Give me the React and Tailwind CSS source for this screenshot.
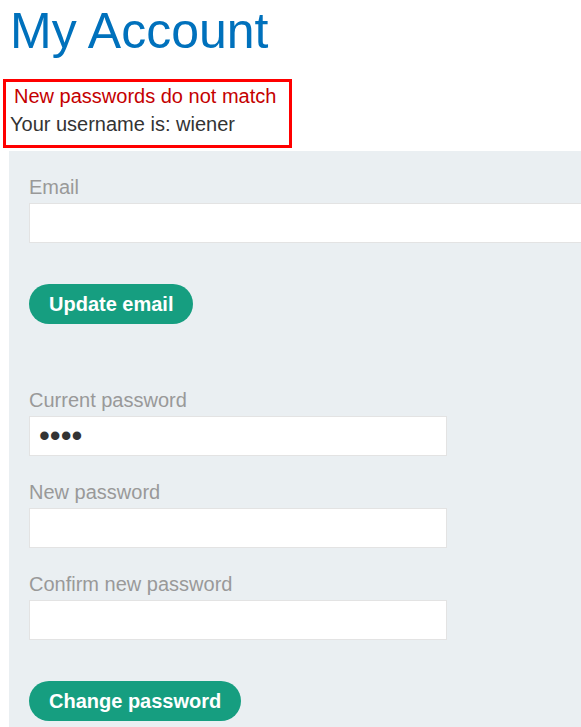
import React from 'react';

// Account page: heading, status notice, and the email / password forms
const Field = ({ label, type = 'text', value, wide = false, top }) => (
  <div className={top}>
    <label className="block text-[20px] leading-6 text-[#999999]">{label}</label>
    <input
      type={type}
      defaultValue={value}
      className={`mt-1 block h-10 border border-[#e3e3e3] bg-white pl-[9px] text-[#333333] outline-none ${type === 'password' ? 'text-[31px]' : 'text-[20px]'} ${wide ? 'w-[640px]' : 'w-[418px]'}`}
    />
  </div>
);

const PillButton = ({ children }) => (
  <button className="h-10 rounded-full bg-[#169e80] px-5 text-[20px] font-bold text-white">
    {children}
  </button>
);

export default function App() {
  return (
    <div className="min-h-[727px] w-full overflow-hidden bg-white font-['Liberation_Sans',Arial,sans-serif]">
      <h1 className="ml-[10px] mt-[6px] text-[50px] font-normal leading-[50px] text-[#0071bc]">My Account</h1>

      <div className="ml-[3px] mt-[23px] w-[289px] border-[3px] border-[#ff0000] pb-[7px] pl-[4px] text-[20px] leading-[28px]">
        <p className="pl-[4px] text-[#c40000]">New passwords do not match</p>
        <p className="text-[#333333]">Your username is: wiener</p>
      </div>

      <div className="ml-[9px] mt-[3px] w-[640px] bg-[#eaeff2] pb-[10px] pl-5 pt-6">
        <form onSubmit={(e) => e.preventDefault()}>
          <Field label="Email" wide />
          <div className="mt-[41px]">
            <PillButton>Update email</PillButton>
          </div>
        </form>

        <form onSubmit={(e) => e.preventDefault()} className="mt-16">
          <Field label="Current password" type="password" value="1234" />
          <Field label="New password" type="password" top="mt-6" />
          <Field label="Confirm new password" type="password" top="mt-6" />
          <div className="mt-[41px]">
            <PillButton>Change password</PillButton>
          </div>
        </form>
      </div>
    </div>
  );
}
